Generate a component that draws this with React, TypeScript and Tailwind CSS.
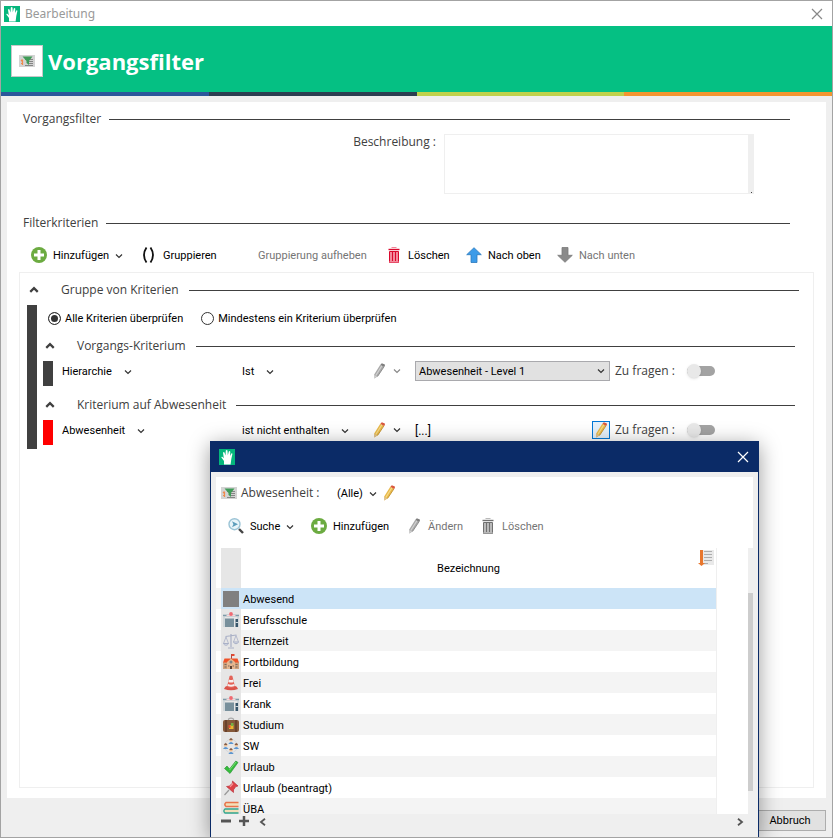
import React, { useState } from "react";

type IconProps = { className?: string };

function Hand({ className = "size-4" }: IconProps) {
  return (
    <svg viewBox="0 0 16 16" className={`${className} shrink-0`} aria-hidden="true">
      <rect width="16" height="16" fill="#05b67c" />
      <path
        d="M5 15.5V12L2.4 8.6Q2.1 7.4 3.3 7.7L4.800 9.2 4 3.8Q4.600 2.600 5.500 3.5L6.500 6.6 6.8 1.6Q7.7.5 8.5 1.6L8.800 6.3 9.800 2.4Q10.8 1.6 11.3 2.7L11 7 12.300 4.5Q13.4 4 13.4 5.1L12.300 10 11.6 15.5Z"
        fill="#fff"
      />
    </svg>
  );
}

function Funnel() {
  return (
    <svg viewBox="0 0 16 14" className="h-3.5 w-4 shrink-0" aria-hidden="true">
      <rect y="1" width="16" height="12" fill="#d3d3d3" />
      <path d="M6 5.500h8M9 7.500h5M9 9.500h5M6 11.500h8" stroke="#858585" />
      <path d="M3.500 6v5M2 7l1.500-1.500M2 9.500h1" stroke="#f08a4b" fill="none" strokeWidth="1.200" />
      <path d="M3.500 2.500h10L10 7V11L7.500 9V7Z" fill="#3f9b57" />
    </svg>
  );
}

function Plus() {
  return (
    <svg viewBox="0 0 16 16" className="size-4 shrink-0" aria-hidden="true">
      <circle cx="8" cy="8" r="8" fill="#6cab41" />
      <path d="M8 3v10M3 8h10" stroke="#fff" strokeWidth="3" />
    </svg>
  );
}

function Parens() {
  return (
    <svg viewBox="0 0 16 16" className="size-4 shrink-0" aria-hidden="true">
      <path d="M5.500 .5Q.5 8 5.500 15.500M9.500 .5Q14.500 8 9.500 15.500" fill="none" stroke="#111" strokeWidth="1.800" />
    </svg>
  );
}

function Trash({ red = false }: { red?: boolean }) {
  const dark = red ? "#d9082d" : "#707070";
  const light = red ? "#f3899b" : "#b9b9b9";
  return (
    <svg viewBox="0 0 16 16" className="size-4 shrink-0" aria-hidden="true">
      <path d="M5.500.5h5" stroke={light} />
      <path d="M2.500 2.500h11" stroke={dark} strokeWidth="1.400" />
      <path d="M3.500 4.500h9V15.500h-9Z" fill={light} stroke={dark} />
      <path d="M6.500 5v9M9.500 5v9" stroke={dark} />
      <path d="M3.500 14.800h9" stroke={light} strokeWidth="1.500" />
    </svg>
  );
}

function Arrow({ up = false }: { up?: boolean }) {
  return (
    <svg viewBox="0 0 16 16" className={up ? "size-4 shrink-0" : "size-4 shrink-0 rotate-180"} aria-hidden="true">
      <path
        d="M8 .7 15.300 7.700H11V15.500H5V7.700H.7Z"
        fill={up ? "#3c9be8" : "#8a8a8a"}
        stroke={up ? "#2b79bd" : "#7a7a7a"}
        strokeWidth=".8"
      />
    </svg>
  );
}

function Pencil({ muted = false }: { muted?: boolean }) {
  return (
    <svg viewBox="0 0 16 16" className="size-4 shrink-0" aria-hidden="true">
      <path d="M9.300 1.800 13 3.800 6.600 13.400 3.200 15.500 3.200 11.600Z" fill={muted ? "#a9a9a9" : "#e8b94a"} />
      <path d="M10.900 2.800 4.800 12.500" stroke={muted ? "#d2d2d2" : "#f7dc8b"} strokeWidth="1.200" />
      <path d="M13 3.800 6.600 13.400" stroke={muted ? "#808080" : "#bd8a26"} strokeWidth=".8" />
      <path d="M9.400 1.800 10.800 .2 13.900 1.500 13.900 3 13 4Z" fill={muted ? "#7e7e7e" : "#d9583d"} />
      <path d="M3.200 12 6 13.600 3 15.600Z" fill={muted ? "#cfcfcf" : "#dcc29a"} />
    </svg>
  );
}

function Search() {
  return (
    <svg viewBox="0 0 16 16" className="size-4 shrink-0" aria-hidden="true">
      <circle cx="6.500" cy="6.200" r="5.500" fill="#e9f4f9" stroke="#9cc4d6" strokeWidth="1.400" />
      <path d="M4 3.200 10 6.200 4 9.200 5.400 6.200Z" fill="#5d9dbb" />
      <path d="M11 11 15 15" stroke="#444" strokeWidth="2.400" />
    </svg>
  );
}

function Chevron({ up = false, color = "#333" }: { up?: boolean; color?: string }) {
  return (
    <svg viewBox="0 0 8 8" className={up ? "size-2.5 shrink-0 rotate-180" : "size-2 shrink-0"} aria-hidden="true">
      <path d="M1 2.500 4 5.500 7 2.500" fill="none" stroke={up ? "#404040" : color} strokeWidth={up ? 1.8 : 1.2} />
    </svg>
  );
}

function Close({ color }: { color: string }) {
  return (
    <svg viewBox="0 0 12 12" className="size-3" aria-hidden="true">
      <path d="M1 1 11 11M11 1 1 11" stroke={color} strokeWidth="1.200" />
    </svg>
  );
}

function SortIcon() {
  return (
    <svg viewBox="0 0 16 16" className="size-4" aria-hidden="true">
      <rect x="5" width="11" height="15" fill="#e9e9e9" />
      <path d="M6 1.500h8M6 4.500h8M6 7.500h8M6 10.500h8M6 13.500h4" stroke="#adadad" />
      <path d="M3.500 0v14" stroke="#e8772e" strokeWidth="3" />
      <path d="M0 13h7L3.500 16Z" fill="#e8772e" />
    </svg>
  );
}

function Building() {
  return (
    <>
      <path d="M0 3.500h16" stroke="#7d9aa8" strokeWidth="1.600" />
      <path d="M2 6.500h9V15H2Z" fill="#78909c" />
      <path d="M1 4.500v10.500M15 4.500v10.500" stroke="#b9c8cf" />
      <path d="M12.500 7h2.500v8h-2.500Z" fill="#37566b" />
      <path d="M12.500 10.500h2.500" stroke="#cfd8dc" />
      <path d="M3.500 3.500h9" stroke="#f9d6d8" strokeWidth="1.200" />
      <circle cx="8" cy="2" r="1.900" fill="#f06a72" />
    </>
  );
}

function Person({ x, y }: { x: number; y: number }) {
  return (
    <g transform={`translate(${x} ${y})`}>
      <circle cx="2.500" cy="1.900" r="1.700" fill="#edb98a" />
      <path d="M.7 1.700Q2.500-1.400 4.300 1.700Z" fill="#5d4037" />
      <path d="M-.2 6Q2.500 1.800 5.200 6Z" fill="#5b95cf" />
    </g>
  );
}

const glyphs: Record<string, React.ReactNode> = {
  square: <rect width="16" height="16" fill="#808080" />,
  building: <Building />,
  scales: (
    <g fill="none" stroke="#a9b0c6">
      <path d="M8 1v13M5 15h6M2.500 3.500 13.500 2" strokeWidth="1.200" />
      <path d="M3 4 .5 10.500M3 4 5.500 10.500M13 2.500 10.500 9M13 2.500 15.500 9" strokeWidth=".8" />
      <path d="M.3 10.500h5.400Q3 14 .3 10.500M10.300 9h5.400Q13 12.500 10.300 9" fill="#dfe3ee" />
    </g>
  ),
  school: (
    <>
      <path d="M8.500 0v5" stroke="#a44" />
      <path d="M8.500 0h3v2h-3Z" fill="#e5492f" />
      <path d="M0 8h16v7H0Z" fill="#cda17d" />
      <path d="M1.500 4.500h13L16 8.500H0Z" fill="#ef5228" />
      <path d="M4 8 8 4.500 12 8v7H4Z" fill="#e6b68f" />
      <circle cx="8" cy="8" r="1.500" fill="#7e8387" />
      <path d="M1.500 10.500h2M1.500 13h2M12.500 10.500h2M12.500 13h2M5 12h1.500M9.500 12h1.500" stroke="#7b6a5d" strokeWidth="1.200" />
      <path d="M7 12h2v3H7Z" fill="#5e4335" />
    </>
  ),
  cone: (
    <>
      <path d="M1 14Q2 11 4 11h8Q14 11 15 14Q8 16.500 1 14" fill="#d9534a" />
      <path d="M6.600 1Q8 .2 9.400 1L12 12Q8 14 4 12Z" fill="#e36358" />
      <path d="M6 4.500Q8 5.500 10 4.500L10.700 7Q8 8.200 5.300 7ZM5 9Q8 10.500 11.100 9L11.700 11Q8 12.500 4.500 11Z" fill="#f7eeee" />
    </>
  ),
  suitcase: (
    <>
      <path d="M5.500 3.500V2Q8 .2 10.500 2v1.500" fill="none" stroke="#aaa" strokeWidth="1.200" />
      <rect y="3" width="16" height="12" rx="2" fill="#85583a" />
      <path d="M3 3v12M13 3v12" stroke="#5b3825" strokeWidth="1.300" />
      <path d="M6 8h4.500v4H6Z" fill="#eab530" />
      <path d="M8 6h2.500v3H8Z" fill="#76b043" />
      <path d="M5.500 8h2v3h-2Z" fill="#dd5238" />
    </>
  ),
  people: (
    <>
      <circle cx="8" cy="8" r="6.500" fill="none" stroke="#c6cdd5" strokeWidth=".6" />
      <Person x={5.5} y={0} />
      <Person x={0.2} y={5} />
      <Person x={10.8} y={5} />
      <Person x={5.5} y={10} />
    </>
  ),
  check: (
    <>
      <path d="M1.500 9.500 4 7 6.500 10 12.800 2 15 3.500 7 14.500Z" fill="#36bd3c" stroke="#208d2b" strokeWidth=".6" />
      <path d="M6.600 11 13 3" stroke="#8be383" strokeWidth=".8" />
    </>
  ),
  pin: (
    <>
      <path d="M1.500 15 6 10" stroke="#999" strokeWidth="1.200" />
      <path d="M9.500 1 15 6 12.800 6.600 10.500 9.800 10.500 12.500 3.500 6.500 6.500 6 9.300 3.200Z" fill="#de4349" stroke="#b32630" strokeWidth=".6" />
      <path d="M10 3.500 7 6.800" stroke="#f49a9b" strokeWidth="1.200" />
    </>
  ),
  books: (
    <>
      <path d="M15.500 1.500H3Q.7 3.500 3 5.500H15.500" fill="#f3dfb8" stroke="#e8744a" strokeWidth="1.600" />
      <path d="M15.500 8H2Q-.3 10 2 12H15.500" fill="#f3dfb8" stroke="#31a78e" strokeWidth="1.400" />
      <path d="M15.500 14H4Q2 15 3 16H15.500" fill="#f3dfb8" stroke="#2e8f9c" strokeWidth="1.400" />
    </>
  ),
};

const rows: [string, string][] = [
  ["square", "Abwesend"],
  ["building", "Berufsschule"],
  ["scales", "Elternzeit"],
  ["school", "Fortbildung"],
  ["cone", "Frei"],
  ["building", "Krank"],
  ["suitcase", "Studium"],
  ["people", "SW"],
  ["check", "Urlaub"],
  ["pin", "Urlaub (beantragt)"],
  ["books", "ÜBA"],
];

function ToolButton({
  icon,
  label,
  width,
  menu = false,
  disabled = false,
}: {
  icon?: React.ReactNode;
  label: string;
  width: string;
  menu?: boolean;
  disabled?: boolean;
}) {
  return (
    <button type="button" disabled={disabled} className={`flex h-6 items-center whitespace-nowrap disabled:text-[#757575] ${width}`}>
      <span className="mr-1.5 flex w-4 shrink-0">{icon}</span>
      <span className="pt-0.5">{label}</span>
      {menu && (
        <span className="ml-1.5 pt-0.5">
          <Chevron />
        </span>
      )}
    </button>
  );
}

const headingText = "font-['Open_Sans','Noto_Sans',sans-serif] text-xs text-[#404040]";

function Section({ title }: { title: string }) {
  return (
    <h2 className={`flex h-4 items-center gap-2 ${headingText}`}>
      <span>{title}</span>
      <span className="h-px flex-1 bg-[#404040]" />
    </h2>
  );
}

function CriteriaTitle({ title }: { title: string }) {
  return (
    <h3 className={`flex h-4 items-center ${headingText}`}>
      <button type="button" aria-label={`${title} einklappen`} className="flex w-[34px] pl-0.5">
        <Chevron up />
      </button>
      <span>{title}</span>
      <span className="ml-2.5 h-px flex-1 bg-[#404040]" />
    </h3>
  );
}

function MenuButton({ label }: { label: string }) {
  return (
    <button type="button" aria-haspopup="menu" className="flex items-center gap-3 pt-0.5">
      {label}
      <Chevron />
    </button>
  );
}

function AskToggle() {
  return (
    <label className={`flex items-center ${headingText}`}>
      <span className="w-[72px] whitespace-nowrap">Zu fragen :</span>
      <input
        type="checkbox"
        role="switch"
        className="relative h-2.5 w-7 appearance-none rounded-full bg-[#a3a3a3] before:absolute before:-top-0.5 before:left-0 before:size-3.5 before:rounded-full before:bg-[#e8e8e8] before:shadow checked:before:left-3.5"
      />
    </label>
  );
}

function Criterion({
  title,
  bar,
  field,
  operator,
  muted = false,
  children,
}: {
  title: string;
  bar: string;
  field: string;
  operator: string;
  muted?: boolean;
  children: React.ReactNode;
}) {
  return (
    <section>
      <CriteriaTitle title={title} />
      <div className="mt-[7px] flex h-[25px] items-start">
        <span className={`h-[25px] w-2.5 shrink-0 ${bar}`} />
        <div className="ml-[9px] flex h-5 items-center">
          <div className="w-[180px]">
            <MenuButton label={field} />
          </div>
          <div className="w-[129px] whitespace-nowrap">
            <MenuButton label={operator} />
          </div>
          <button type="button" aria-label="Kriterium bearbeiten" disabled={muted} className="flex w-11 items-center gap-1.5">
            <Pencil muted={muted} />
            <Chevron color={muted ? "#888" : "#333"} />
          </button>
          <div className="w-[200px]">{children}</div>
          <AskToggle />
        </div>
      </div>
    </section>
  );
}

function Radio({ label, checked, onChange }: { label: string; checked: boolean; onChange: () => void }) {
  return (
    <label className="flex items-center gap-1 whitespace-nowrap">
      <input
        type="radio"
        name="match"
        checked={checked}
        onChange={onChange}
        className="size-[13px] appearance-none rounded-full border border-[#333] bg-white checked:bg-[#333] checked:shadow-[inset_0_0_0_2px_#fff]"
      />
      <span className="pt-0.5">{label}</span>
    </label>
  );
}

function PickerDialog() {
  return (
    <section
      role="dialog"
      aria-label="Abwesenheit"
      className="absolute top-[440px] right-[73px] bottom-0 left-[209px] flex flex-col border border-b-0 border-[#0b2b67] bg-[#efefef] shadow-[0_4px_20px_rgba(0,0,0,0.4)]"
    >
      <header className="flex h-[30px] shrink-0 items-center justify-between bg-[#0b2b67] px-2">
        <Hand />
        <button type="button" aria-label="Schließen" className="mr-px">
          <Close color="#fff" />
        </button>
      </header>
      <div className="mx-[5px] mt-[5px] flex min-h-0 flex-1 flex-col bg-white">
        <div className="flex h-8 shrink-0 items-center pl-[5px]">
          <Funnel />
          <span className={`ml-1 w-24 ${headingText}`}>Abwesenheit :</span>
          <button type="button" aria-haspopup="menu" className="flex w-11 items-center gap-1.5 pt-0.5">
            (Alle)
            <Chevron />
          </button>
          <button type="button" aria-label="Abwesenheit bearbeiten">
            <Pencil />
          </button>
        </div>
        <div className="flex h-[39px] shrink-0 items-center pb-[5px] pl-3">
          <ToolButton icon={<Search />} label="Suche" width="w-[83px]" menu />
          <ToolButton icon={<Plus />} label="Hinzufügen" width="w-[95px]" />
          <ToolButton icon={<Pencil muted />} label="Ändern" width="w-[74px]" disabled />
          <ToolButton icon={<Trash />} label="Löschen" width="w-20" disabled />
        </div>
        <div className="flex min-h-0 flex-1">
          <div className="min-w-0 flex-1 overflow-hidden">
            <table className="w-full border-collapse text-left leading-3">
              <thead>
                <tr className="h-10">
                  <th className="w-[5px] p-0" />
                  <th className="w-5 bg-[#e6e6e6] p-0" />
                  <th className="relative border-r border-[#efefef] p-0 pt-0.5 pr-5 text-center font-normal">
                    Bezeichnung
                    <span className="absolute top-0.5 right-0.5">
                      <SortIcon />
                    </span>
                  </th>
                </tr>
              </thead>
              <tbody>
                {rows.map(([icon, name], i) => (
                  <tr key={name} className={i % 2 ? "h-[21px] bg-white" : "h-[21px] bg-[#f4f4f4]"}>
                    <td className="w-[5px] p-0" />
                    <td className={i === 0 ? "bg-[#cce4f7] p-0 pl-0.5" : "bg-[#e6e6e6] p-0 pl-0.5"}>
                      <svg viewBox="0 0 16 16" className="size-4" aria-hidden="true">
                        {glyphs[icon]}
                      </svg>
                    </td>
                    <td className={i === 0 ? "border-r border-[#efefef] bg-[#cce4f7] p-0 pt-0.5 pl-0.5" : "border-r border-[#efefef] p-0 pt-0.5 pl-0.5"}>
                      {name}
                    </td>
                  </tr>
                ))}
              </tbody>
            </table>
          </div>
          <div className="w-[31px] shrink-0" />
          <div className="w-[5px] shrink-0 bg-[#efefef] pt-[45px]">
            <div className="h-[198px] bg-[#cdcdcd]" />
          </div>
        </div>
      </div>
      <footer className="flex h-[23px] shrink-0 items-start px-2.5 pt-0.5">
        <button type="button" aria-label="Entfernen" className="mr-2">
          <svg viewBox="0 0 10 10" className="size-2.5"><path d="M0 5h10" stroke="#555" strokeWidth="3" /></svg>
        </button>
        <button type="button" aria-label="Hinzufügen" className="mr-2.5">
          <svg viewBox="0 0 10 10" className="size-2.5"><path d="M0 5h10M5 0v10" stroke="#555" strokeWidth="2.500" /></svg>
        </button>
        <button type="button" aria-label="Zurück" className="mt-0.5">
          <svg viewBox="0 0 8 8" className="size-2"><path d="M6 .8 2 4 6 7.200" fill="none" stroke="#555" strokeWidth="1.800" /></svg>
        </button>
        <button type="button" aria-label="Weiter" className="mt-0.5 mr-1 ml-auto">
          <svg viewBox="0 0 8 8" className="size-2"><path d="M2 .8 6 4 2 7.200" fill="none" stroke="#555" strokeWidth="1.800" /></svg>
        </button>
      </footer>
    </section>
  );
}

export default function App() {
  const [all, setAll] = useState(true);
  return (
    <div className="relative flex h-screen min-h-[600px] flex-col overflow-hidden border border-[#a3a3a3] bg-[#efefef] font-[Roboto,'Open_Sans',sans-serif] text-[11px] leading-4 text-black">
      <header className="flex h-[25px] shrink-0 items-center gap-[5px] bg-white pr-[9px] pl-[3px]">
        <Hand />
        <span className="font-['Noto_Sans','Open_Sans',sans-serif] text-xs text-[#999]">Bearbeitung</span>
        <button type="button" aria-label="Fenster schließen" className="ml-auto">
          <Close color="#888" />
        </button>
      </header>
      <div className="flex h-[66px] shrink-0 items-center gap-[5px] bg-[#05c083] pt-1 pl-2.5">
        <span className="flex size-8 items-center justify-center border border-[#c8c8c8] bg-white">
          <Funnel />
        </span>
        <h1 className="font-['Open_Sans','Noto_Sans',sans-serif] text-[22px] leading-8 font-bold text-white">Vorgangsfilter</h1>
      </div>
      <div className="grid h-1 shrink-0 grid-cols-4">
        <span className="bg-[#2b579a]" />
        <span className="bg-[#2c3e50]" />
        <span className="bg-[#bfd14b]" />
        <span className="bg-[#f39530]" />
      </div>
      <main className="mx-1.5 mt-1.5 flex min-h-0 flex-1 flex-col bg-white pt-[9px] pr-3 pb-2.5 pl-3">
        <div className="pr-6 pl-1">
          <Section title="Vorgangsfilter" />
          <div className="mt-[7px] flex justify-end gap-2 pr-9">
            <label htmlFor="description" className={headingText}>
              Beschreibung :
            </label>
            <div className="relative">
              <textarea id="description" className="block h-[60px] w-[310px] resize-none border border-r-[6px] border-[#efefef] outline-none" />
              <span className="absolute right-0.5 bottom-px size-px bg-[#404040]" />
            </div>
          </div>
          <div className="mt-[21px]">
            <Section title="Filterkriterien" />
          </div>
        </div>
        <div className="mt-3 flex h-6 shrink-0 items-center pl-3">
          <ToolButton icon={<Plus />} label="Hinzufügen" width="w-[110px]" menu />
          <ToolButton icon={<Parens />} label="Gruppieren" width="w-[95px]" />
          <ToolButton label="Gruppierung aufheben" width="w-[150px]" disabled />
          <ToolButton icon={<Trash red />} label="Löschen" width="w-20" />
          <ToolButton icon={<Arrow up />} label="Nach oben" width="w-[91px]" />
          <ToolButton icon={<Arrow />} label="Nach unten" width="w-24" disabled />
        </div>
        <div className="mt-[5px] min-h-0 flex-1 border border-[#efefef] pt-[9px] pr-3.5 pl-[7px]">
          <CriteriaTitle title="Gruppe von Kriterien" />
          <div className="mt-[7px] flex">
            <span className="w-2.5 shrink-0 bg-[#404040]" />
            <div className="flex min-w-0 flex-1 flex-col pr-1 pb-1 pl-1.5">
              <div className="mt-[5px] mb-3 flex h-4 items-center gap-[18px] pl-[5px]">
                <Radio label="Alle Kriterien überprüfen" checked={all} onChange={() => setAll(true)} />
                <Radio label="Mindestens ein Kriterium überprüfen" checked={!all} onChange={() => setAll(false)} />
              </div>
              <Criterion title="Vorgangs-Kriterium" bar="bg-[#404040]" field="Hierarchie" operator="Ist" muted>
                <div className="relative w-[195px]">
                  <select aria-label="Hierarchie" className="block h-5 w-full appearance-none border border-[#a9a9ad] bg-[#e1e1e1] pt-0.5 pl-[3px]">
                    <option>Abwesenheit - Level 1</option>
                  </select>
                  <span className="pointer-events-none absolute top-1.5 right-[5px]">
                    <Chevron />
                  </span>
                </div>
              </Criterion>
              <div className="h-[11px]" />
              <Criterion title="Kriterium auf Abwesenheit" bar="bg-[#f00]" field="Abwesenheit" operator="ist nicht enthalten">
                <div className="flex h-[18px] items-center justify-between pr-[5px]">
                  <span className="pt-0.5 text-xs">[...]</span>
                  <button type="button" aria-label="Auswahl bearbeiten" className="flex size-[18px] items-center justify-center border border-[#0078d7] bg-[#e5f1fb]">
                    <Pencil />
                  </button>
                </div>
              </Criterion>
            </div>
          </div>
        </div>
      </main>
      <footer className="flex h-[39px] shrink-0 items-center justify-end pt-1.5 pr-1.5">
        <button type="button" className="h-[21px] w-[72px] border border-[#adadad] bg-[#e1e1e1]">
          Abbruch
        </button>
      </footer>
      <PickerDialog />
    </div>
  );
}
